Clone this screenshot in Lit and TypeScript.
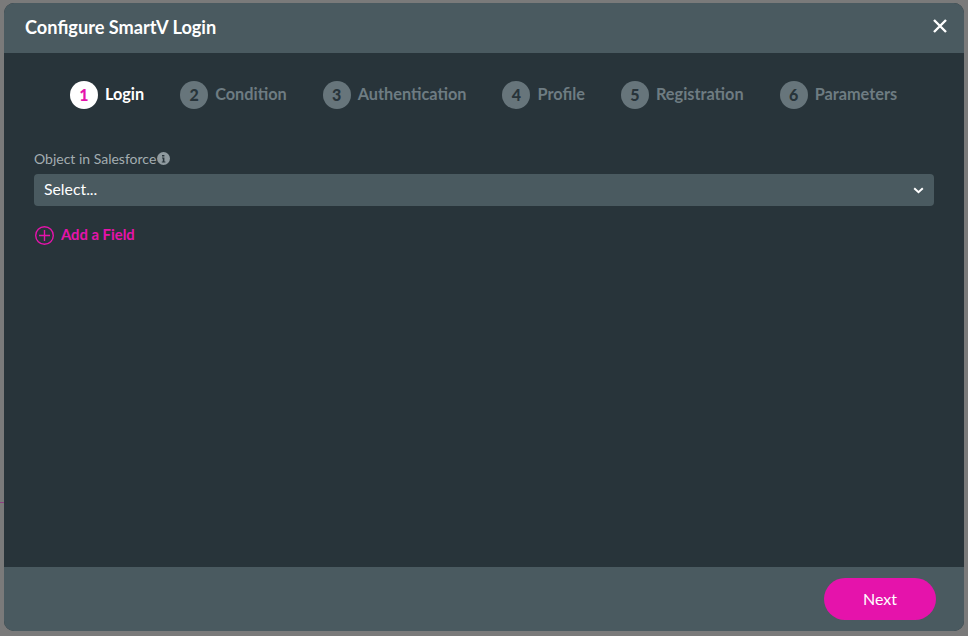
import { LitElement, html, css } from "lit";
import { customElement } from "lit/decorators.js";

const STEPS = ["Login", "Condition", "Authentication", "Profile", "Registration", "Parameters"];

@customElement("app-root")
export class AppRoot extends LitElement {
  static styles = css`
    :host {
      display: block;
      width: 968px;
      height: 636px;
      box-sizing: border-box;
      padding: 3px 4px 5px;
      background: #7a7a7a;
      font-family: Lato, "Liberation Sans", sans-serif;
      position: relative;
      overflow: hidden;
    }
    .line {
      position: absolute;
      left: 0;
      top: 502px;
      width: 4px;
      height: 1px;
      background: #8d3d82;
    }
    .modal {
      height: 100%;
      display: flex;
      flex-direction: column;
      border-radius: 10px;
      overflow: hidden;
      background: #28343a;
    }
    .head {
      height: 50px;
      flex: none;
      background: #4a5a60;
      display: flex;
      align-items: center;
      justify-content: space-between;
      padding: 0 16px 0 21px;
    }
    .title {
      color: #fff;
      font-size: 18.2px;
      font-weight: 700;
      position: relative;
      top: -1px;
    }
    .close {
      display: block;
      width: 16px;
      height: 16px;
      position: relative;
      top: -2px;
    }
    .body {
      flex: 1;
      padding: 28px 30px 0;
    }
    .steps {
      display: flex;
      justify-content: center;
      gap: 36px;
      height: 28px;
      margin-bottom: 41px;
      padding-left: 1px;
      position: relative;
      left: -1px;
    }
    .step {
      display: flex;
      align-items: center;
      gap: 7px;
      color: #6e7c82;
      font-size: 16.3px;
      font-weight: 700;
    }
    .text { padding-bottom: 3px; }
    .num {
      width: 28px;
      height: 28px;
      box-sizing: border-box;
      padding-bottom: 2px;
      border-radius: 50%;
      background: #67757b;
      color: #28343a;
      display: flex;
      align-items: center;
      justify-content: center;
      font-size: 16px;
      font-weight: 900;
    }
    .step.on { color: #fff; }
    .step.on .num { background: #fff; color: #e513ab; }
    .label {
      display: flex;
      align-items: center;
      height: 17px;
      gap: 1px;
      color: #a3adb1;
      font-size: 14px;
      margin-bottom: 7px;
    }
    .info {
      width: 13px;
      height: 13px;
      display: block;
    }
    .select {
      height: 32px;
      border-radius: 4px;
      background: #4a5a60;
      display: flex;
      align-items: center;
      justify-content: space-between;
      padding: 0 10px;
      color: #fff;
      font-size: 15.8px;
    }
    .select .text { padding-bottom: 4px; }
    .chev { width: 11px; height: 7px; display: block; }
    .add {
      display: flex;
      align-items: center;
      gap: 7px;
      margin: 19px 0 0 1px;
      color: #e513ab;
      font-size: 14.8px;
      font-weight: 700;
    }
    .add .text { padding-bottom: 2px; }
    .plus { width: 19px; height: 19px; display: block; }
    .foot {
      height: 64px;
      flex: none;
      background: #4a5a60;
      display: flex;
      align-items: center;
      justify-content: flex-end;
      padding: 0 28px 0 0;
    }
    .next {
      width: 112px;
      height: 42px;
      border: 0;
      border-radius: 21px;
      background: #e513ab;
      color: #fff;
      font: 400 16px Lato, "Liberation Sans", sans-serif;
      padding: 0 0 2px;
    }
  `;

  render() {
    return html`
      <div class="line"></div>
      <div class="modal">
        <div class="head">
          <span class="title">Configure SmartV Login</span>
          <svg class="close" viewBox="0 0 16 16"><path d="M2 2 14 14M14 2 2 14" stroke="#fff" stroke-width="2.4" fill="none"/></svg>
        </div>
        <div class="body">
          <div class="steps">
            ${STEPS.map((s, i) => html`
              <div class="step ${i === 0 ? "on" : ""}">
                <span class="num">${i + 1}</span><span class="text">${s}</span>
              </div>`)}
          </div>
          <div class="label">Object in Salesforce
            <svg class="info" viewBox="0 0 13 13">
              <circle cx="6.5" cy="6.5" r="6.5" fill="#8f9a9f"/>
              <path d="M5 3h2.4v1.6H5zM5 5.5h2.4V9.4H8.4V10.4H4.8V9.4H5.8V6.5H5z" fill="#28343a"/>
            </svg>
          </div>
          <div class="select">
            <span class="text">Select...</span>
            <svg class="chev" viewBox="0 0 11 7"><path d="M1.2 1.2 5.5 5.2 9.8 1.2" stroke="#fff" stroke-width="2" fill="none"/></svg>
          </div>
          <div class="add">
            <svg class="plus" viewBox="0 0 19 19"><circle cx="9.5" cy="9.5" r="8.8" stroke="#e513ab" stroke-width="1.4" fill="none"/><path d="M9.5 4v11M4 9.5h11" stroke="#e513ab" stroke-width="1.4"/></svg>
            <span class="text">Add a Field</span>
          </div>
        </div>
        <div class="foot"><button class="next">Next</button></div>
      </div>
    `;
  }
}
